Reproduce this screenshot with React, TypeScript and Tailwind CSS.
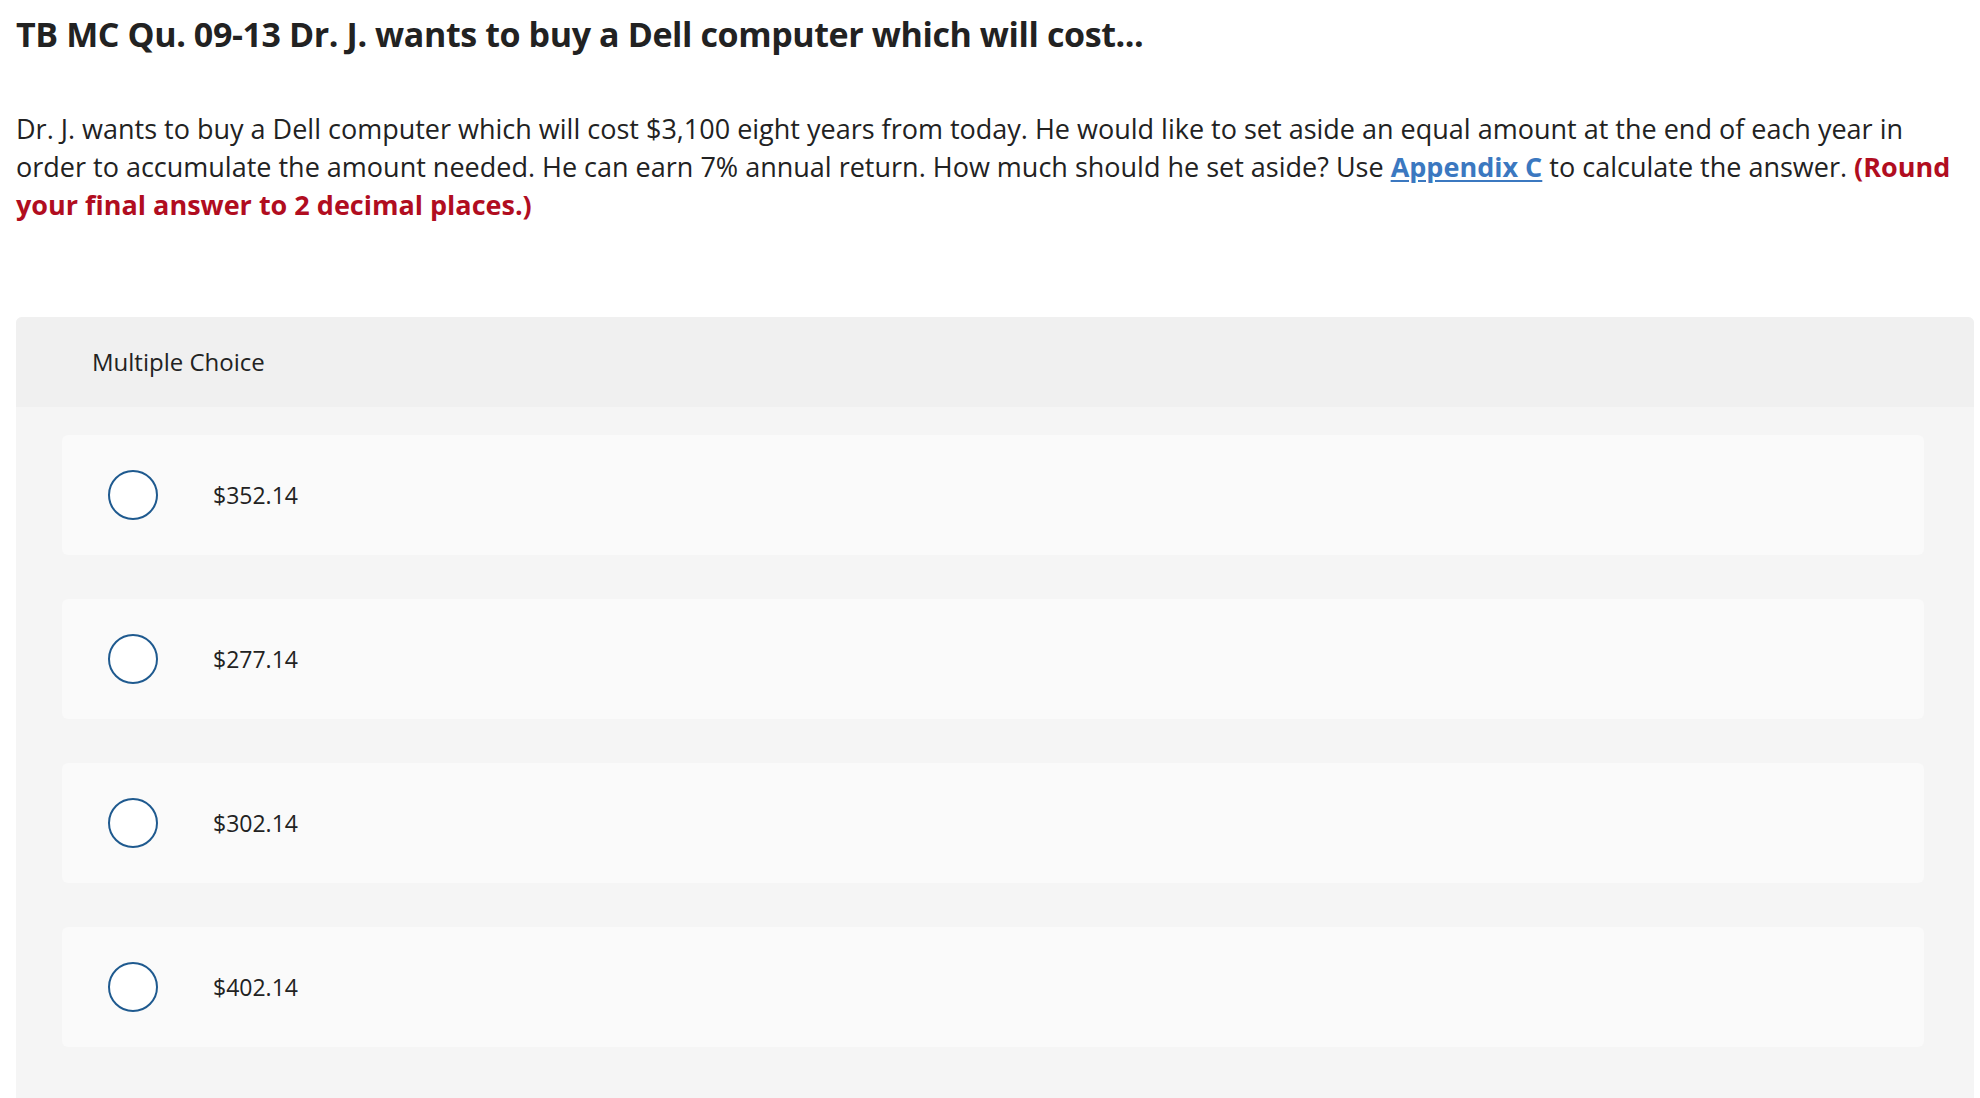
import React from 'react';

const choices = ['$352.14', '$277.14', '$302.14', '$402.14'];

export default function App() {
  return (
    <div className="min-h-screen bg-white text-[#222222]" style={{ fontFamily: '"Open Sans", "Liberation Sans", sans-serif' }}>
      <div className="pl-4 pr-[6px] pt-[10px]">
        {/* Question title */}
        <h1 className="text-[34px] font-bold leading-[48px] tracking-[-0.4px]">
          TB MC Qu. 09-13 Dr. J. wants to buy a Dell computer which will cost...
        </h1>

        {/* Question body */}
        <p className="mt-[52px] text-[27px] leading-[38px]">
          Dr. J. wants to buy a Dell computer which will cost $3,100 eight years from today. He would like to set aside an equal amount at the end of each year in order to accumulate the amount needed. He can earn 7% annual return. How much should he set aside? Use{' '}
          <a href="#" className="font-bold text-[#3b78c0] underline underline-offset-[3px]">
            Appendix C
          </a>{' '}
          to calculate the answer.{' '}
          <span className="font-bold text-[#b10d1f]">(Round your final answer to 2 decimal places.)</span>
        </p>

        {/* Answer panel */}
        <div className="mt-[93px] rounded-t-[6px] bg-[#f5f5f5]">
          <div className="flex h-[90px] items-center rounded-t-[6px] bg-[#f0f0f0] pl-[76px] text-[24px]">
            Multiple Choice
          </div>
          <div className="flex flex-col gap-[44px] pl-[46px] pr-[50px] pt-[28px] pb-[60px]">
            {choices.map((c) => (
              <label key={c} className="flex h-[120px] cursor-pointer items-center rounded-[6px] bg-[#fafafa] pl-[46px]">
                <span className="h-[50px] w-[50px] shrink-0 rounded-full border-2 border-[#1f5a8f] bg-white" />
                <span className="ml-[55px] text-[23px]">{c}</span>
              </label>
            ))}
          </div>
        </div>
      </div>
    </div>
  );
}
